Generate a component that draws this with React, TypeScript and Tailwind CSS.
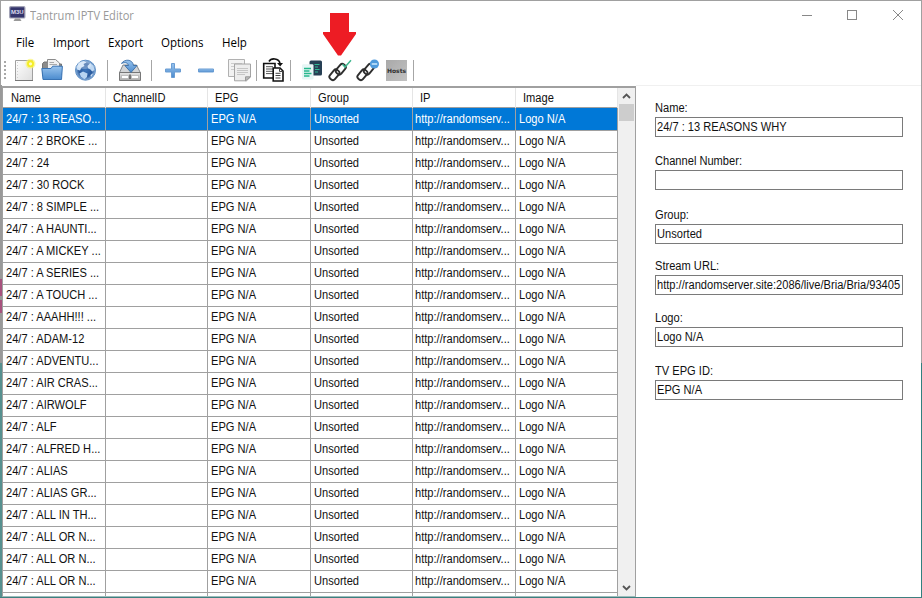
import type { ReactNode } from 'react';

const channels = [
  '24/7 : 13 REASO...',
  '24/7 : 2 BROKE ...',
  '24/7 : 24',
  '24/7 : 30 ROCK',
  '24/7 : 8 SIMPLE ...',
  '24/7 : A HAUNTI...',
  '24/7 : A MICKEY ...',
  '24/7 : A SERIES ...',
  '24/7 : A TOUCH ...',
  '24/7 : AAAHH!!! ...',
  '24/7 : ADAM-12',
  '24/7 : ADVENTU...',
  '24/7 : AIR CRAS...',
  '24/7 : AIRWOLF',
  '24/7 : ALF',
  '24/7 : ALFRED H...',
  '24/7 : ALIAS',
  '24/7 : ALIAS GR...',
  '24/7 : ALL IN TH...',
  '24/7 : ALL OR N...',
  '24/7 : ALL OR N...',
  '24/7 : ALL OR N...',
];

const fields = [
  { label: 'Name:', value: '24/7 : 13 REASONS WHY', gap: 'mb-4' },
  { label: 'Channel Number:', value: '', gap: 'mb-[17px]' },
  { label: 'Group:', value: 'Unsorted', gap: 'mb-[14px]' },
  { label: 'Stream URL:', value: 'http://randomserver.site:2086/live/Bria/Bria/93405', gap: 'mb-[15px]' },
  { label: 'Logo:', value: 'Logo N/A', gap: 'mb-4' },
  { label: 'TV EPG ID:', value: 'EPG N/A', gap: '' },
];

const gridCols = 'grid grid-cols-[103px_102px_103px_102px_103px_102px]';

// Condensed dialog text
function T({ children }: { children: ReactNode }) {
  return <span className="inline-block origin-left scale-x-[0.925] whitespace-pre">{children}</span>;
}

function Icon({ className, children }: { className: string; children: ReactNode }) {
  return (
    <svg viewBox="0 0 24 24" className={`h-6 w-6 shrink-0 ${className}`} fill="none">
      {children}
    </svg>
  );
}

function Separator({ className }: { className: string }) {
  return <div className={`h-[21px] w-px shrink-0 bg-[#a6a6a6] ${className}`} />;
}

function ChainLinks() {
  return (
    <g stroke="#2e2e2e" strokeWidth="1.9" strokeLinejoin="round">
      <rect x="-5.6" y="-3.2" width="11.2" height="6.4" rx="2.6" transform="translate(6.4 16.8) rotate(-50)" />
      <rect x="-5.6" y="-3.2" width="11.2" height="6.4" rx="2.6" transform="translate(12.8 11.2) rotate(-50)" />
    </g>
  );
}

function Toolbar() {
  return (
    <div className="flex h-6 items-center">
      <svg viewBox="0 0 3 20" className="ml-[3px] h-5 w-[3px] shrink-0">
        <path d="M1 1V20" stroke="#a8a8a8" strokeWidth="2" strokeDasharray="2 2" />
      </svg>
      {/* New */}
      <Icon className="ml-1.5">
        <path d="M2.5 2.5H19.5V22.5H2.5Z" fill="url(#page)" stroke="#a0a0a0" />
        <path d="M2 22.5H20" stroke="#777" />
        <path d="M4.5 4V21" stroke="#cfcfcf" strokeDasharray="1 2" />
        <circle cx="17.5" cy="5.8" r="5" fill="#fbf46d" opacity=".65" />
        <circle cx="17.5" cy="5.8" r="3.5" fill="#f5ed25" />
        <circle cx="17.5" cy="5.8" r="1.6" fill="#fffcc4" />
      </Icon>
      {/* Open */}
      <Icon className="ml-[3px]">
        <path d="M2.5 18V5.5L4 4H9L11 6H21.5V17" fill="#8b8b8b" stroke="#747474" />
        <path d="M7.5 1.5H15.5L19.5 5V13H7.5Z" fill="#f1f1f1" stroke="#8b8b8b" />
        <path d="M9.5 4.5H14M9.5 6.5H17" stroke="#aaa" />
        <path d="M1.8 10.5H11L12.7 8.2H22.4L21.5 21.5H3Z" fill="url(#folder)" stroke="#3973b4" />
      </Icon>
      {/* Globe */}
      <Icon className="ml-[9px]">
        <circle cx="12.5" cy="12.2" r="10" fill="url(#globe)" stroke="#5d8ec4" />
        <path d="M3.5 9L6 4.7 10.7 3 13.5 4.5 10.5 6 11.5 8 8.5 9.5 7 12.5 4 11.5Z" fill="#cce1f7" />
        <path d="M14.5 8L17.3 5 20.5 7.8 21.5 12 19.2 13.6 17.4 11.5 15.2 10.5Z" fill="#bfd8f2" />
        <path d="M6.5 15.5L10 13.5 14.5 15.5 14 19 11.5 21.3 8 18.7Z" fill="#b7d4f1" />
        <path d="M17.5 17L20.4 15.2 18 19Z" fill="#dceafa" />
        <ellipse cx="11.5" cy="7" rx="6.8" ry="4" fill="#fff" opacity=".28" />
      </Icon>
      <Separator className="ml-2.5" />
      {/* Save */}
      <Icon className="ml-[9px]">
        <path d="M2.3 15L6 7H19.5L23.5 15Z" fill="#d2d4d6" stroke="#83878a" />
        <path d="M2.5 14.5H23.5V22.5H2.5Z" fill="url(#drive)" stroke="#777" />
        <path d="M4.5 17.5H11.5V20.5H4.5ZM14.5 17.5H21.5V20.5H14.5Z" fill="#fff" stroke="#a3a3a3" strokeWidth=".6" />
        <path d="M13 16.5V21" stroke="#222" />
        <path d="M4.5 5.5C7 1 15.5.5 16.5 7.5H20L14 14.5 7.8 7.5H11.5C10.6 4.2 7.5 4.2 4.5 5.5Z" fill="url(#folder)" stroke="#2e659f" strokeWidth=".8" />
      </Icon>
      <Separator className="ml-2.5" />
      {/* Add */}
      <Icon className="ml-[9px]">
        <path d="M10.5 5.5H13.5V11H19.5V14H13.5V19.5H10.5V14H4.5V11H10.5Z" fill="url(#folder)" stroke="#6b9dd3" />
      </Icon>
      {/* Remove */}
      <Icon className="ml-[9px]">
        <path d="M4.5 11H19.5V14H4.5Z" fill="url(#folder)" stroke="#6b9dd3" />
      </Icon>
      {/* Copy */}
      <Icon className="ml-[9px]">
        <path d="M1.5 1.5H17.5V18.5H1.5Z" fill="#f2f2f2" stroke="#b1b1b1" />
        <path d="M4 5.5H15M4 8.5H15M4 11.5H15" stroke="#ccc" />
        <path d="M7.5 6H23.5V19L19.5 22.8H7.5Z" fill="#ededed" stroke="#a4a4a4" />
        <path d="M10 10.5H21M10 12.5H21M10 14.5H21M10 16.5H18" stroke="#c6c6c6" />
        <path d="M18.5 22.8V18.8H23.5Z" fill="#bbb" stroke="#999" />
      </Icon>
      <Separator className="ml-[5px]" />
      {/* Paste */}
      <Icon className="ml-1">
        <path d="M2.7 5.5H14V20H2.7Z" fill="#fff" stroke="#111" strokeWidth="1.6" />
        <path d="M5 8.7H12M5 11H12M5 13.3H12M5 15.6H12" stroke="#555" />
        <path d="M12.2 10H19L22 13V23H12.2Z" fill="#fff" stroke="#111" strokeWidth="1.6" />
        <path d="M18.5 10V13.5H22M14.5 15.3H19.5M14.5 17.5H19.5M14.5 20H19.5" stroke="#444" />
        <path d="M8 3.5C10-.2 18-.2 19 5.5" stroke="#111" strokeWidth="1.6" />
        <path d="M16 5H22L19.2 8.5Z" fill="#111" />
      </Icon>
      <Separator className="ml-[5px]" />
      {/* Merge */}
      <Icon className="ml-[9px]">
        <rect x="9.5" y="2.5" width="12.5" height="15" rx="1.5" fill="#263f54" />
        <path d="M14.5 6.5H19.5M15 9H18M15 11.5H19.5M15 14H18" stroke="#31b996" strokeWidth="1.2" />
        <rect x="2" y="6.2" width="11.5" height="15.3" rx="1.2" fill="#e6f6f5" />
        <path d="M4 10.5H11M4 13H9.5M4 15.5H11.5M4 18H9.5" stroke="#25b78d" strokeWidth="1.5" />
      </Icon>
      {/* Check links */}
      <Icon className="ml-1">
        <ChainLinks />
        <path d="M14.5 6.2L17 9 23 2.2" stroke="#40b78f" strokeWidth="1.5" />
      </Icon>
      {/* Remove links */}
      <Icon className="ml-1">
        <ChainLinks />
        <circle cx="18.4" cy="6" r="4.6" fill="#4f9bdc" />
        <path d="M15.7 6H21.2" stroke="#d6efff" strokeWidth="1.4" />
      </Icon>
      <div className="ml-1.5 flex h-[21px] w-[21px] shrink-0 items-center justify-center bg-linear-to-br from-[#a9a9a9] to-[#c2c2c2] pt-px font-['DejaVu_Sans',sans-serif] text-[6px] font-bold text-[#333]">
        Hosts
      </div>
      <Separator className="ml-1.5" />
      <svg width="0" height="0">
        <defs>
          <linearGradient id="page" x2="1" y2="1">
            <stop stopColor="#fff" />
            <stop offset="1" stopColor="#dedede" />
          </linearGradient>
          <linearGradient id="folder" x2="0" y2="1">
            <stop stopColor="#99c4ee" />
            <stop offset="1" stopColor="#4b8bce" />
          </linearGradient>
          <linearGradient id="drive" x2="0" y2="1">
            <stop stopColor="#e8e8e8" />
            <stop offset="1" stopColor="#a8a8a8" />
          </linearGradient>
          <radialGradient id="globe">
            <stop stopColor="#3b75bb" />
            <stop offset=".65" stopColor="#2a5b9e" />
            <stop offset="1" stopColor="#8bb3df" />
          </radialGradient>
        </defs>
      </svg>
    </div>
  );
}

function TitleBar() {
  return (
    <div className="flex h-[30px] items-center pl-2">
      <svg viewBox="0 0 17 16" className="mb-1 h-4 w-[17px]">
        <rect x=".7" y=".7" width="15.2" height="11.3" rx="1" fill="#34356c" stroke="#a2a3b6" strokeWidth="1.2" />
        <path d="M6 12.5H11L12.5 15H4.5Z" fill="#999" />
        <text x="8.3" y="7.7" textAnchor="middle" fontSize="6" fontWeight="bold" fontFamily="Liberation Sans" fill="#ddddf0">
          M3U
        </text>
      </svg>
      <span className="ml-1 origin-left scale-x-[0.925] font-['Open_Sans',sans-serif] text-xs text-[#999]">Tantrum IPTV Editor</span>
      <svg viewBox="0 0 103 12" className="mr-[17px] mb-0.5 ml-auto h-3 w-[103px]" stroke="#888" fill="none" shapeRendering="crispEdges">
        <path d="M1 6.5H11" />
        <rect x="46.5" y="1.5" width="9" height="9" />
        <path d="M92 1L102 11M102 1L92 11" shapeRendering="auto" />
      </svg>
    </div>
  );
}

function MenuBar() {
  return (
    <div className="flex h-[27px] items-center pb-[3px] font-['Open_Sans',sans-serif] text-xs text-black">
      <span className="ml-[15px] w-[37px] origin-left scale-x-[0.96]">File</span>
      <span className="w-[55px] origin-left scale-x-[0.96]">Import</span>
      <span className="w-[53px] origin-left scale-x-[0.96]">Export</span>
      <span className="w-[61px] origin-left scale-x-[0.96]">Options</span>
      <span className="origin-left scale-x-[0.96]">Help</span>
    </div>
  );
}

function ChannelGrid() {
  return (
    <div className="flex h-[511px] w-[634px] shrink-0 overflow-hidden border-t-2 border-r border-b border-l border-[#a0a0a0] border-b-[#9dbcbb]">
      <div className="w-[615px] shrink-0">
        <div className={`${gridCols} h-5 border-b border-[#a0a0a0]`}>
          {['Name', 'ChannelID', 'EPG', 'Group', 'IP', 'Image'].map((title, i) => (
            <div key={title} className={`border-r border-[#e5e5e5] leading-[21px] ${i === 0 ? 'pl-2' : 'pl-[7px]'}`}>
              <T>{title}</T>
            </div>
          ))}
        </div>
        {channels.map((name, i) => (
          <div
            key={i}
            className={`${gridCols} h-[22px] leading-[22px] *:border-r *:border-b *:border-[#a0a0a0] *:pl-[3px] ${
              i === 0 ? 'bg-[#0078d7] text-white' : ''
            }`}
          >
            <div><T>{name}</T></div>
            <div />
            <div><T>EPG N/A</T></div>
            <div><T>Unsorted</T></div>
            <div className="!pl-0.5"><T>http://randomserv...</T></div>
            <div><T>Logo N/A</T></div>
          </div>
        ))}
        <div className={`${gridCols} h-[5px] *:border-r *:border-[#a0a0a0]`}>
          <div /><div /><div /><div /><div /><div />
        </div>
      </div>
      <div className="flex w-[17px] flex-col items-center bg-[#f0f0f0]">
        <svg viewBox="0 0 9 6" className="mt-[5px] h-1.5 w-[9px]" fill="none" stroke="#555" strokeWidth="1.8">
          <path d="M1 5L4.5 1.5 8 5" />
        </svg>
        <div className="mt-[5px] h-[17px] w-[15px] bg-[#cdcdcd]" />
        <svg viewBox="0 0 9 6" className="mt-auto mb-[5px] h-1.5 w-[9px]" fill="none" stroke="#555" strokeWidth="1.8">
          <path d="M1 1L4.5 4.5 8 1" />
        </svg>
      </div>
    </div>
  );
}

function DetailsPanel() {
  return (
    <div className="flex-1 border-t border-[#f0f0f0] pt-[14px] pl-[19px]">
      {fields.map((field) => (
        <div key={field.label} className={field.gap}>
          <div className="h-[17px] leading-4"><T>{field.label}</T></div>
          <div className="h-5 w-[248px] border border-[#7a7a7a] pl-px leading-[18px]">
            <T>{field.value}</T>
          </div>
        </div>
      ))}
    </div>
  );
}

export default function App() {
  return (
    <div className="relative flex h-[598px] w-[922px] flex-col overflow-hidden bg-white font-['Liberation_Sans',sans-serif] text-[12px] text-[#111]">
      <div className="h-[85px] shrink-0 border-x border-t border-[#a0a0a0]">
        <TitleBar />
        <MenuBar />
        <Toolbar />
      </div>
      <div className="flex h-[512px] shrink-0">
        {/* Desktop showing at the window's left edge */}
        <div className="flex w-0.5 shrink-0 flex-col bg-[#999]">
          <div className="mt-[194px] h-[17px] bg-[#a7527e]" />
          <div className="mt-1 h-[13px] bg-[#a7527e]" />
          <div className="mt-[50px] flex-1 bg-[#56908f]" />
        </div>
        <div className="pt-px">
          <ChannelGrid />
        </div>
        <DetailsPanel />
        <div className="flex w-px flex-col bg-[#a0a0a0]">
          <div className="mt-[278px] flex-1 bg-[#32807f]" />
        </div>
      </div>
      <div className="h-px bg-[#3e8080]" />
      <svg viewBox="0 0 34 44" className="absolute top-[13px] left-[323px] h-11 w-[34px]">
        <path d="M7 0H26V19H33V21L18 42.5H15L0 21V19H7Z" fill="#ed1c24" />
      </svg>
    </div>
  );
}
